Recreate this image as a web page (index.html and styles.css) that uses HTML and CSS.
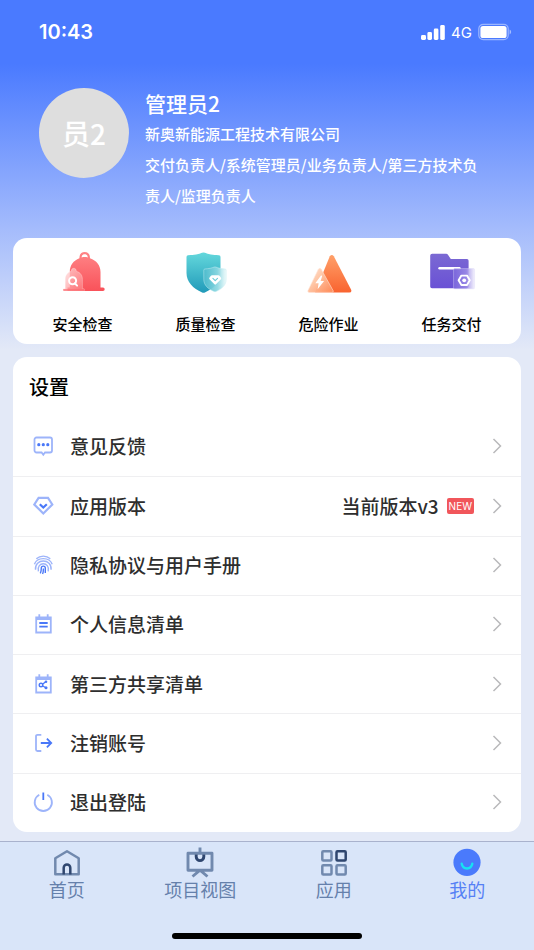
FILE: index.html
```html
<!DOCTYPE html>
<html lang="zh-CN">
<head>
<meta charset="utf-8">
<meta name="viewport" content="width=device-width, initial-scale=1">
<title>我的</title>
<link rel="stylesheet" href="styles.css">
</head>
<body>
<div class="status">
  <time class="status-time">10:43</time>
  <div class="status-icons">
    <svg width="24" height="16" viewBox="0 0 24 16" fill="#fff" aria-hidden="true">
      <rect x="0" y="11" width="5" height="5" rx="1.4"/><rect x="6.4" y="8" width="4.6" height="8" rx="1.4"/><rect x="12.8" y="4.5" width="4.6" height="11.5" rx="1.4"/><rect x="19.2" y="1" width="4.6" height="15" rx="1.4"/>
    </svg>
    <span class="status-net">4G</span>
    <svg width="34" height="18" viewBox="0 0 34 18" aria-hidden="true">
      <rect x=".8" y="1.3" width="29.4" height="15.4" rx="4.4" fill="none" stroke="#fff" stroke-opacity=".45" stroke-width="1.2"/>
      <rect x="2.4" y="3" width="26.2" height="12" rx="2.6" fill="#fff"/>
      <path d="M31.6 6.6c2 .8 2 4 0 4.8z" fill="#fff" fill-opacity=".5"/>
    </svg>
  </div>
</div>

<header class="profile">
  <div class="avatar">员2</div>
  <div class="profile-text">
    <h1 class="name">管理员2</h1>
    <p class="line">新奥新能源工程技术有限公司</p>
    <p class="line">交付负责人/系统管理员/业务负责人/第三方技术负责人/监理负责人</p>
  </div>
</header>

<main class="content">
  <nav class="card shortcuts" aria-label="快捷入口">
    <a class="shortcut" href="#safety">
      <svg width="48" height="44" viewBox="0 0 48 44" aria-hidden="true">
        <defs>
          <linearGradient id="bell" x1="0" y1="0" x2="0" y2="1"><stop offset="0" stop-color="#ff8587"/><stop offset="1" stop-color="#f9525a"/></linearGradient>
          <linearGradient id="bellGhost" x1="0" y1="0" x2="1" y2="1"><stop offset="0" stop-color="#ffe4e4" stop-opacity=".7"/><stop offset="1" stop-color="#ff7478" stop-opacity=".8"/></linearGradient>
        </defs>
        <path fill="url(#bell)" fill-rule="evenodd" d="M20.400 7.200C20.300 3.300 22.400 1 25.700 1s5.400 2.300 5.300 6.200C37.500 9.400 41.500 14.300 41.500 21v15.600H44a1.700 1.700 0 0 1 0 3.400H8.500V36.600h2.300V21c0-6.700 3.600-11.600 9.600-13.800zM22.600 6.400c2-.6 4.200-.6 6.200 0-.1-2-1.200-3.100-3.100-3.100s-3 1.100-3.100 3.100z"/>
        <path fill="url(#bellGhost)" stroke="#fff" stroke-opacity=".4" stroke-width=".7" d="M12.300 20.300c0-2 .9-3 2.500-3s2.500 1 2.500 3c4 1 6.100 4 6.100 8v9.500h1.300c1.300 0 1.300 2.200 0 2.200H4.900c-1.300 0-1.300-2.200 0-2.200h1.300v-9.500c0-4 2.100-7 6.100-8z"/>
        <path d="M5 39h20" stroke="#fb6a70" stroke-opacity=".6" stroke-width="1.800" stroke-linecap="round"/>
        <circle cx="13.600" cy="29.800" r="3.500" fill="none" stroke="#fff" stroke-width="2"/>
        <path d="M15.800 32.300l2.300 2.300" stroke="#fff" stroke-width="2" stroke-linecap="round"/>
      </svg>
      <span>安全检查</span>
    </a>
    <a class="shortcut" href="#quality">
      <svg width="48" height="44" viewBox="0 0 48 44" aria-hidden="true">
        <defs>
          <linearGradient id="shield" x1="0" y1="0" x2="0" y2="1"><stop offset="0" stop-color="#64d8dc"/><stop offset="1" stop-color="#219ab9"/></linearGradient>
          <linearGradient id="shieldGhost" x1="0" y1="0" x2="1" y2="0"><stop offset="0" stop-color="#4fbccd"/><stop offset=".6" stop-color="#8ad7e1"/><stop offset="1" stop-color="#eefafb"/></linearGradient>
        </defs>
        <path fill="url(#shield)" d="M6 4.300c6-.3 11-1.300 14-2.600q1.500-.6 3 0c3 1.300 8 2.300 14 2.600q1.500.2 1.500 1.700V22c0 9-6.500 15.400-15.600 19.400q-1.400.6-2.800 0C11 37.400 4.500 31 4.500 22V6q0-1.500 1.500-1.700z"/>
        <path fill="url(#shieldGhost)" fill-opacity=".92" stroke="#c9eff3" stroke-opacity=".6" stroke-width=".8" d="M22.800 18c4-.3 7-.9 9.200-1.900q1-.4 2 0c2.200 1 5.200 1.600 9.200 1.900q1 .1 1 1.100v9.200c0 5.800-4.200 9.700-10.200 12.200q-1 .4-2 0c-6-2.500-10.200-6.400-10.200-12.200v-9.200q0-1 1-1.100z"/>
        <path fill="#fff" d="M30 24.300h6.400q.7 0 1.100.5l1.500 2q.5.800-.1 1.500l-4.900 5q-.8.700-1.600 0l-4.900-5q-.6-.7-.1-1.500l1.500-2q.4-.5 1.100-.5z"/>
        <path d="M30.900 27.400l2.300 2.200 2.300-2.200" fill="none" stroke="#6ccad6" stroke-width="1.100" stroke-linecap="round" stroke-linejoin="round"/>
      </svg>
      <span>质量检查</span>
    </a>
    <a class="shortcut" href="#danger">
      <svg width="48" height="44" viewBox="0 0 48 44" aria-hidden="true">
        <defs>
          <linearGradient id="tri" x1="0" y1="0" x2="0" y2="1"><stop offset="0" stop-color="#ffa069"/><stop offset="1" stop-color="#f9632f"/></linearGradient>
          <linearGradient id="triGhost" x1="0" y1="0" x2="1" y2="1"><stop offset="0" stop-color="#ffe3d4"/><stop offset=".4" stop-color="#ffc6a5"/><stop offset="1" stop-color="#ff8a57"/></linearGradient>
        </defs>
        <path fill="url(#tri)" d="M24.800 5.200q2-2.600 4 0L46 38.400q1.300 3-1.800 3.100H10z"/>
        <path fill="url(#triGhost)" fill-opacity=".96" stroke="#ffe6da" stroke-opacity=".7" stroke-width=".8" d="M13.300 18.300q1.500-2 3 0l11.800 21.300q.8 1.700-1.100 1.800H4.300q-2.200-.1-1.200-2.200z"/>
        <path fill="#fff" d="M16 24.500l-5.700 7.700h3.300l-1 6 6.500-8.200h-3.500l1.700-5.200z"/>
      </svg>
      <span>危险作业</span>
    </a>
    <a class="shortcut" href="#tasks">
      <svg width="48" height="44" viewBox="0 0 48 44" aria-hidden="true">
        <defs>
          <linearGradient id="folder" x1="0" y1="0" x2="0" y2="1"><stop offset="0" stop-color="#7b69d3"/><stop offset="1" stop-color="#6a51d5"/></linearGradient>
          <linearGradient id="folderGhost" x1="0" y1="0" x2="1" y2="0"><stop offset="0" stop-color="#7c68dc"/><stop offset=".6" stop-color="#9d8de8"/><stop offset="1" stop-color="#f1effc"/></linearGradient>
        </defs>
        <path fill="url(#folder)" d="M4.200 2.800h14q1 0 1.600.8l3 4.500H39q1.600 0 1.600 1.600v25.700q0 1.800-1.800 1.800H4q-1.800 0-1.800-1.800V4.800q0-2 2-2z"/>
        <path d="M11.500 17.300h20" stroke="#fff" stroke-width="2.400" stroke-linecap="round"/>
        <rect x="25.600" y="17.600" width="21" height="20.200" rx="1.200" fill="url(#folderGhost)" fill-opacity=".85" stroke="#dcd6f8" stroke-opacity=".5" stroke-width=".8"/>
        <path d="M33.400 24.600h5.600l2.800 4.700L39 34h-5.600l-2.800-4.700z" fill="none" stroke="#fff" stroke-width="1.900" stroke-linejoin="round"/>
        <circle cx="36.200" cy="29.300" r="1.900" fill="#fff"/>
      </svg>
      <span>任务交付</span>
    </a>
  </nav>

  <section class="card settings">
    <h2 class="settings-title">设置</h2>
    <ul class="rows">
      <li><a class="row" href="#feedback">
        <svg class="row-icon" viewBox="0 0 22 22" aria-hidden="true"><path class="soft" d="M4.500 2.500h13.500a2 2 0 0 1 2 2v11a2 2 0 0 1-2 2h-5l-1.700 2.200-1.700-2.200H4.500a2 2 0 0 1-2-2v-11a2 2 0 0 1 2-2z"/><circle class="dot" cx="6.800" cy="9.700" r="1.600"/><circle class="dot" cx="11.300" cy="9.700" r="1.600"/><circle class="dot" cx="15.800" cy="9.700" r="1.600"/></svg>
        <span class="row-label">意见反馈</span>
        <svg class="chevron" viewBox="0 0 10 16" aria-hidden="true"><path d="M1.500 1l7 7-7 7"/></svg>
      </a></li>
      <li><a class="row" href="#version">
        <svg class="row-icon" viewBox="0 0 22 22" aria-hidden="true"><path class="soft heavy" d="M6.600 2.800h9.400l4.300 6.700-9 9-9-9z"/><path class="strong heavy" d="M7.800 9.200l3.500 3.300 3.500-3.300"/></svg>
        <span class="row-label">应用版本</span>
        <span class="row-value">当前版本v3</span>
        <span class="badge">NEW</span>
        <svg class="chevron" viewBox="0 0 10 16" aria-hidden="true"><path d="M1.500 1l7 7-7 7"/></svg>
      </a></li>
      <li><a class="row" href="#privacy">
        <svg class="row-icon" viewBox="0 0 22 22" aria-hidden="true"><path class="soft fine" d="M4.300 4.800c4-3.600 10-3.600 14 0M2.400 10.200c2.800-7.400 15-7.400 17.800 0M3.500 15.800c-1.200-11.800 16.800-11.800 15.600 0M6.400 17.300C4.200 7.300 18.400 7.300 16.200 17.300"/><path class="strong fine" d="M8.300 19.300c1-1.800 1-3.400 1-5.200 0-2.700 4-2.700 4 0v4.800M11.400 14.600c0 2.300 0 3.800-.8 5.400"/></svg>
        <span class="row-label">隐私协议与用户手册</span>
        <svg class="chevron" viewBox="0 0 10 16" aria-hidden="true"><path d="M1.500 1l7 7-7 7"/></svg>
      </a></li>
      <li><a class="row" href="#personal">
        <svg class="row-icon" viewBox="0 0 22 22" aria-hidden="true"><path class="soft" d="M4.200 4.500h14.600v15H4.200zM4.200 6h14.600M7.300 1.300v5M15.700 1.300v5"/><path class="strong" d="M7.300 10h8.400M7.300 13.600h8.400"/></svg>
        <span class="row-label">个人信息清单</span>
        <svg class="chevron" viewBox="0 0 10 16" aria-hidden="true"><path d="M1.500 1l7 7-7 7"/></svg>
      </a></li>
      <li><a class="row" href="#sharing">
        <svg class="row-icon" viewBox="0 0 22 22" aria-hidden="true"><path class="soft" d="M4.200 4.500h14.600v15H4.200zM4.200 6h14.600M7.300 1.300v5M15.700 1.300v5"/><circle class="strong fine" cx="9" cy="12" r="1.800"/><path class="strong fine" d="M10.800 11l2.600-2M10.800 13l2.600 1.500"/><circle class="dot" cx="14" cy="8.800" r="1.300"/><circle class="dot" cx="14" cy="14.800" r="1.500"/></svg>
        <span class="row-label">第三方共享清单</span>
        <svg class="chevron" viewBox="0 0 10 16" aria-hidden="true"><path d="M1.500 1l7 7-7 7"/></svg>
      </a></li>
      <li><a class="row" href="#cancel">
        <svg class="row-icon" viewBox="0 0 22 22" aria-hidden="true"><path class="soft" d="M9.300 2.800H5.500a1.500 1.500 0 0 0-1.500 1.500v13.200A1.500 1.500 0 0 0 5.500 19h3.800"/><path class="strong" d="M8.800 11h10.400M14.900 6.700l4.300 4.300-4.300 4.300"/></svg>
        <span class="row-label">注销账号</span>
        <svg class="chevron" viewBox="0 0 10 16" aria-hidden="true"><path d="M1.500 1l7 7-7 7"/></svg>
      </a></li>
      <li><a class="row" href="#logout">
        <svg class="row-icon" viewBox="0 0 22 22" aria-hidden="true"><path class="soft" d="M7.300 3.800a8.600 8.600 0 1 0 8 0"/><path class="strong" d="M11.300 1.500v7.500"/></svg>
        <span class="row-label">退出登陆</span>
        <svg class="chevron" viewBox="0 0 10 16" aria-hidden="true"><path d="M1.500 1l7 7-7 7"/></svg>
      </a></li>
    </ul>
  </section>
</main>

<footer class="dock">
  <nav class="tabs" aria-label="主导航">
    <a class="tab" href="#home">
      <svg width="30" height="32" viewBox="0 0 30 32" fill="none" aria-hidden="true"><path d="M15 4.200l11.700 7v16H3.300v-16z" stroke="#7189ae" stroke-width="2.500" stroke-linejoin="round"/><path d="M11.700 27.500v-6.700a3.300 3.300 0 0 1 6.600 0v6.700" stroke="#2f466f" stroke-width="2.500"/></svg>
      <span>首页</span>
    </a>
    <a class="tab" href="#projects">
      <svg width="30" height="32" viewBox="0 0 30 32" fill="none" aria-hidden="true"><path d="M15 .5v5M3 6.300h24v16.900H3zM15 23.200l-7.500 6.300M15 23.200l7.500 6.300" stroke="#7189ae" stroke-width="2.900" stroke-linejoin="round"/><path d="M11.200 7.500v2.300a3.800 3.800 0 0 0 7.600 0V7.500" stroke="#2f466f" stroke-width="2.900"/></svg>
      <span>项目视图</span>
    </a>
    <a class="tab" href="#apps">
      <svg width="30" height="32" viewBox="0 0 30 32" fill="none" stroke="#7189ae" stroke-width="2.500" aria-hidden="true"><rect x="3.300" y="4.200" width="9.200" height="9.200" rx="1"/><rect x="3.300" y="18.200" width="9.200" height="9.200" rx="1"/><rect x="17.500" y="18.200" width="9.200" height="9.200" rx="1"/><rect x="17.500" y="4.200" width="9.200" height="9.200" rx="1" stroke="#2f466f"/></svg>
      <span>应用</span>
    </a>
    <a class="tab current" href="#me" aria-current="page">
      <svg width="30" height="32" viewBox="0 0 30 32" fill="none" aria-hidden="true"><circle cx="15" cy="15.300" r="13.600" fill="#4a7afc"/><path d="M9.700 16.800c1.300 6.300 9.300 6.300 10.600 0" stroke="#16e3f2" stroke-width="2.400" stroke-linecap="round"/></svg>
      <span>我的</span>
    </a>
  </nav>
  <div class="home-indicator"></div>
</footer>
</body>
</html>
```
FILE: styles.css
```css
* {
  box-sizing: border-box;
}

body {
  margin: 0;
  min-height: 100vh;
  display: flex;
  flex-direction: column;
  background: #e3e9f7 linear-gradient(#4a7aff 0, #4a7aff 64px, #a5bcfc 230px, #e3e9f7 350px) no-repeat;
  color: #2e2e2e;
  font-family: "Noto Sans CJK SC", sans-serif;
  font-weight: 500;
}

h1,
h2,
p,
ul {
  margin: 0;
  padding: 0;
}

ul {
  list-style: none;
}

a {
  color: inherit;
  text-decoration: none;
}

svg {
  display: block;
  flex: none;
}

/* Status bar */
.status {
  display: flex;
  align-items: center;
  justify-content: space-between;
  height: 64px;
  padding: 0 22px 0 39px;
  color: #fff;
  font-family: Inter, sans-serif;
}

.status-time {
  font-size: 20px;
  font-weight: 600;
}

.status-icons {
  display: flex;
  align-items: center;
  gap: 6px;
}

.status-net {
  font-size: 15px;
  font-weight: 400;
}

/* Profile */
.profile {
  display: flex;
  align-items: flex-start;
  gap: 16px;
  padding: 24px 48px 27px 39px;
  color: #fff;
}

.avatar {
  flex: none;
  display: grid;
  place-items: center;
  width: 90px;
  height: 90px;
  border-radius: 50%;
  background: #dedede;
  font-size: 28px;
  line-height: 30px;
}

.name {
  font-size: 21px;
  font-weight: 500;
  line-height: 30px;
}

.line {
  font-size: 15px;
  line-height: 31px;
}

/* Cards */
.content {
  flex: 1;
  display: flex;
  flex-direction: column;
  gap: 13px;
  padding: 0 13px 9px;
}

.card {
  border-radius: 14px;
  background: #fff;
}

.shortcuts {
  display: grid;
  grid-template-columns: repeat(4, 1fr);
  padding: 13px 8px 10px;
}

.shortcut {
  display: flex;
  flex-direction: column;
  align-items: center;
  gap: 18px;
  color: #000;
  font-size: 15px;
  line-height: 21px;
}

.settings {
  flex: 1;
  display: flex;
  flex-direction: column;
}

.settings-title {
  padding: 0 16px;
  color: #000;
  font-size: 20px;
  font-weight: 500;
  line-height: 60px;
}

.rows {
  flex: 1;
  display: grid;
  grid-auto-rows: 1fr;
}

.rows li + li {
  border-top: 1px solid #efeff1;
}

.row {
  display: flex;
  align-items: center;
  height: 100%;
  padding: 0 19px 1px;
  font-size: 19px;
  line-height: 28px;
}

.row-icon {
  width: 22px;
  height: 22px;
  margin-right: 16px;
  fill: none;
  stroke-width: 1.8;
}

.row-label {
  flex: 1;
}

.soft {
  stroke: #9db4fa;
}

.strong {
  stroke: #4a78f8;
}

.heavy {
  stroke-width: 2.2;
}

.fine {
  stroke-width: 1.4;
}

.dot {
  fill: #4a78f8;
}

.badge {
  margin-left: 8px;
  padding: 0 2px;
  border-radius: 2px;
  background: #f1565b;
  color: #fff;
  font-family: Inter, sans-serif;
  font-size: 10px;
  font-weight: 400;
  line-height: 16px;
}

.chevron {
  width: 10px;
  height: 16px;
  margin-left: 18px;
  fill: none;
  stroke: #b9b9bb;
  stroke-width: 1.5;
}

/* Bottom tabs */
.dock {
  border-top: 1px solid #a9b2cd;
  background: #d9e5f9;
}

.tabs {
  display: grid;
  grid-template-columns: repeat(4, 1fr);
  padding: 5px 0 34px;
}

.tab {
  display: flex;
  flex-direction: column;
  align-items: center;
  color: #6580ab;
  font-size: 18px;
  font-weight: 400;
  line-height: 20px;
}

.current {
  color: #5580f5;
}

.home-indicator {
  width: 190px;
  height: 6px;
  margin: 0 auto 11px;
  border-radius: 3px;
  background: #000;
}
```
